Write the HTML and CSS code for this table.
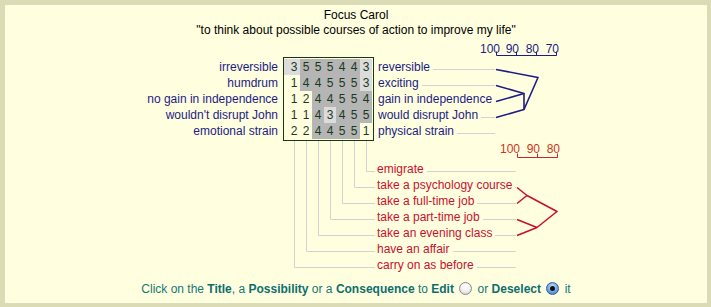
FILE: index.html
```html
<!DOCTYPE html>
<html>
<head>
<meta charset="utf-8">
<link rel="stylesheet" href="styles.css">
</head>
<body>
<div class="frame">
  <div class="title">
    <div>Focus Carol</div>
    <div>"to think about possible courses of action to improve my life"</div>
  </div>
  <div class="chart">
    <div class="upper">
      <div class="left-col">
        <div class="row">irreversible</div>
        <div class="row">humdrum</div>
        <div class="row">no gain in independence</div>
        <div class="row">wouldn't disrupt John</div>
        <div class="row">emotional strain</div>
      </div>
      <div class="grid">
        <div class="grow"><span class="c l">3</span><span class="c d">5</span><span class="c d">5</span><span class="c d">5</span><span class="c d">4</span><span class="c d">4</span><span class="c l">3</span></div>
        <div class="grow"><span class="c">1</span><span class="c d">4</span><span class="c d">4</span><span class="c d">5</span><span class="c d">5</span><span class="c d">5</span><span class="c l">3</span></div>
        <div class="grow"><span class="c">1</span><span class="c">2</span><span class="c d">4</span><span class="c d">4</span><span class="c d">5</span><span class="c d">5</span><span class="c d">4</span></div>
        <div class="grow"><span class="c">1</span><span class="c">1</span><span class="c d">4</span><span class="c l">3</span><span class="c d">4</span><span class="c d">5</span><span class="c d">5</span></div>
        <div class="grow"><span class="c">2</span><span class="c">2</span><span class="c d">4</span><span class="c d">4</span><span class="c d">5</span><span class="c d">5</span><span class="c">1</span></div>
      </div>
      <div class="right-col">
        <div class="row lrow"><span>reversible</span><i class="lead"></i></div>
        <div class="row lrow"><span>exciting</span><i class="lead"></i></div>
        <div class="row lrow"><span>gain in independence</span><i class="lead"></i></div>
        <div class="row lrow"><span>would disrupt John</span><i class="lead"></i></div>
        <div class="row lrow"><span>physical strain</span><i class="lead"></i></div>
      </div>
    </div>
    <div class="cons">
      <div class="row lrow"><span>emigrate</span><i class="lead"></i></div>
      <div class="row lrow"><span>take a psychology course</span><i class="lead"></i></div>
      <div class="row lrow"><span>take a full-time job</span><i class="lead"></i></div>
      <div class="row lrow"><span>take a part-time job</span><i class="lead"></i></div>
      <div class="row lrow"><span>take an evening class</span><i class="lead"></i></div>
      <div class="row lrow"><span>have an affair</span><i class="lead"></i></div>
      <div class="row lrow"><span>carry on as before</span><i class="lead"></i></div>
    </div>
  </div>
  <div class="hint">Click on the <b>Title</b>, a <b>Possibility</b> or a <b>Consequence</b> to <b>Edit</b> <span class="radio"></span> or <b>Deselect</b> <span class="radio on"></span> it</div>

  <svg class="lines" width="711" height="307" viewBox="0 0 711 307">
    <g stroke="#d2d2d2" stroke-width="1" fill="none">
      <polyline points="366.5,141 366.5,171.5 375,171.5"/>
      <polyline points="354.5,141 354.5,187.5 375,187.5"/>
      <polyline points="342.5,141 342.5,203.5 375,203.5"/>
      <polyline points="330.5,141 330.5,219.5 375,219.5"/>
      <polyline points="318.5,141 318.5,235.5 375,235.5"/>
      <polyline points="306.5,141 306.5,251.5 375,251.5"/>
      <polyline points="294.5,141 294.5,267.5 375,267.5"/>
    </g>
    <g class="scale-blue" fill="#1c1c84" font-size="12">
      <text x="500" y="52.5" text-anchor="end">100</text>
      <text x="519" y="52.5" text-anchor="end">90</text>
      <text x="539" y="52.5" text-anchor="end">80</text>
      <text x="559" y="52.5" text-anchor="end">70</text>
    </g>
    <g stroke="#1c1c84" stroke-width="1" fill="none">
      <polyline points="496.5,51.5 496.5,55.5 556.5,55.5 556.5,51.5"/>
      <line x1="516.5" y1="51.5" x2="516.5" y2="55.5"/>
      <line x1="536.5" y1="51.5" x2="536.5" y2="55.5"/>
    </g>
    <g stroke="#1c1c84" stroke-width="1.6" fill="none" stroke-linejoin="round">
      <polyline points="496,85.5 524,93.5 496,101.5"/>
      <line x1="524" y1="93.5" x2="524" y2="109.5"/>
      <polyline points="496,117.5 524,109.5 538,77.5 496,69.5"/>
    </g>
    <g fill="#cc3322" font-size="12">
      <text x="520" y="152.5" text-anchor="end">100</text>
      <text x="540" y="152.5" text-anchor="end">90</text>
      <text x="560" y="152.5" text-anchor="end">80</text>
    </g>
    <g stroke="#cc2233" stroke-width="1" fill="none">
      <polyline points="517.5,153.5 517.5,157.5 557.5,157.5 557.5,153.5"/>
      <line x1="537.5" y1="153.5" x2="537.5" y2="157.5"/>
    </g>
    <g stroke="#c8102e" stroke-width="1.6" fill="none" stroke-linejoin="round">
      <polyline points="517,187.5 527,195.5 517,203.5"/>
      <polyline points="517,219.5 537,227.5 517,235.5"/>
      <polyline points="527,195.5 557,211.5 537,227.5"/>
    </g>
  </svg>
</div>
</body>
</html>
```

FILE: styles.css
```css
html, body {
  margin: 0;
  padding: 0;
  background: #dbdbb5;
}

.frame {
  position: relative;
  box-sizing: border-box;
  width: 711px;
  height: 307px;
  border-style: solid;
  border-color: #dbdbb5;
  border-width: 5px 4px 4px 5px;
  background: #ffffe0;
  font-family: "Liberation Sans", Arial, sans-serif;
  font-size: 12px;
  line-height: 15px;
  color: #000;
}

.title {
  padding-top: 3px;
  text-align: center;
}

.chart {
  margin-top: 19px;
}

.upper {
  display: flex;
  align-items: flex-start;
}

.row {
  box-sizing: border-box;
  height: 16px;
  padding-top: 1px;
  line-height: 15px;
  white-space: nowrap;
}

.left-col {
  width: 273px;
  margin-right: 5px;
  padding-top: 2px;
  text-align: right;
  color: #1c1c84;
}

.grid {
  border: 1px solid #163a16;
  padding: 1px 1px 1px 0;
  color: #1a3a1a;
}

.grow {
  display: flex;
  height: 16px;
}

.c {
  box-sizing: border-box;
  width: 12px;
  height: 16px;
  padding-top: 1px;
  line-height: 15px;
  text-align: center;
}

.c:first-child {
  width: 16px;
  padding-left: 4px;
}

.c.d {
  background: #b5b5b5;
}

.c.l {
  background: #dcdcdc;
}

.right-col {
  width: 117px;
  margin-left: 4px;
  padding-top: 2px;
  color: #1c1c84;
}

.lrow {
  display: flex;
  align-items: flex-start;
}

.lead {
  flex: 1;
  height: 0;
  margin-left: 3px;
  margin-top: 9px;
  border-top: 1px solid #d2d2d2;
}

.cons {
  width: 139px;
  margin-left: 372px;
  margin-top: 20px;
  color: #c8102e;
}

.hint {
  margin-top: 9px;
  text-align: center;
  color: #137777;
  line-height: 15px;
}

.hint b {
  color: #0e6e6e;
}

.radio {
  position: relative;
  display: inline-block;
  box-sizing: border-box;
  width: 13px;
  height: 13px;
  margin: 0 2px;
  border: 1px solid #8c8c8c;
  border-radius: 50%;
  background: radial-gradient(circle at 50% 35%, #ffffff 0%, #f2f2f2 45%, #c8c8c8 100%);
  vertical-align: -2px;
}

.radio.on {
  border-color: #3a5d96;
  background: radial-gradient(circle at 50% 35%, #cfe6fb 0%, #7fb2ea 45%, #2f6ccc 100%);
}

.radio.on::after {
  content: "";
  position: absolute;
  left: 3px;
  top: 3px;
  width: 5px;
  height: 5px;
  border-radius: 50%;
  background: #111;
}

.lines {
  position: absolute;
  left: -5px;
  top: -5px;
  pointer-events: none;
  font-family: "Liberation Sans", Arial, sans-serif;
}
```
